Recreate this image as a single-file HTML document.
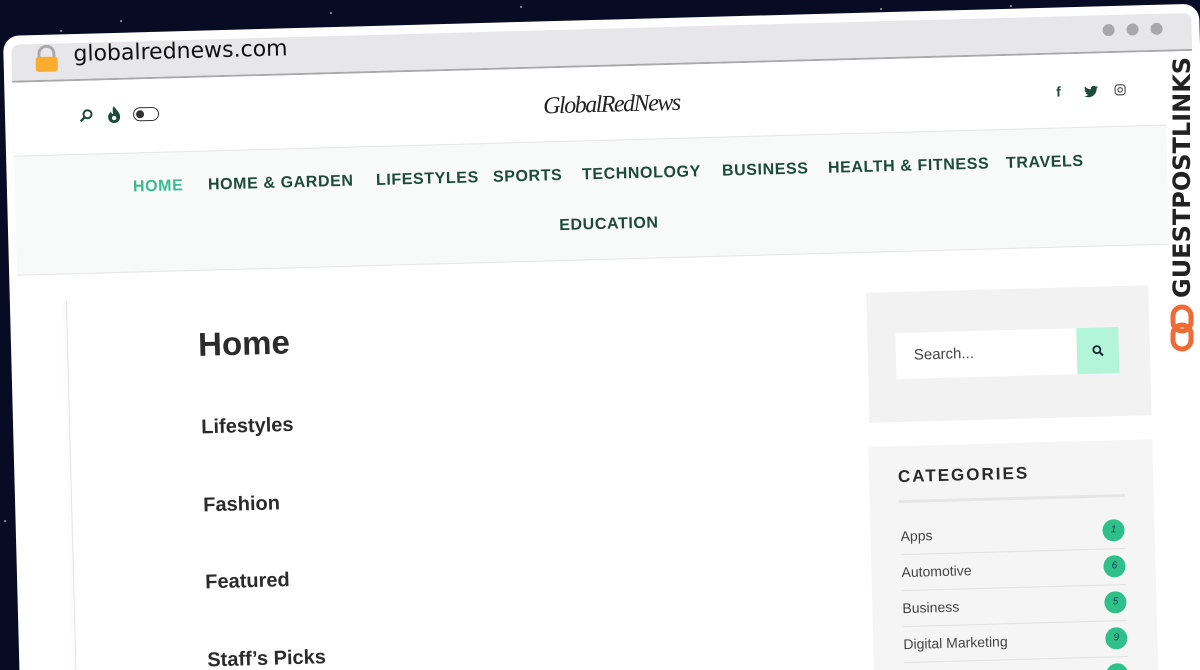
<!DOCTYPE html>
<html><head><meta charset="utf-8"><style>
*{margin:0;padding:0;box-sizing:border-box}
html,body{width:1200px;height:670px;overflow:hidden}
body{background:#070b24;position:relative;font-family:"Liberation Sans",sans-serif}
.star{position:absolute;width:2px;height:2px;background:#fff;border-radius:50%;opacity:.6}
#w{position:absolute;left:0;top:0;width:1200px;height:760px;transform-origin:0 0;transform:matrix(1,-0.027,0.026,1,0,0);overflow:hidden}
.a{position:absolute}
.frame{left:2px;top:36px;width:1196px;height:760px;background:#fff;border-radius:16px}
.bar{left:10px;top:45px;width:1180px;height:38px;background:#e7e7e9;border-bottom:2px solid #a9a9ab;border-radius:8px 8px 0 0}
.page{left:10px;top:85px;width:1152px;height:700px;background:#fff}
.nav{left:10px;top:156px;width:1152px;height:120px;background:#f8f9f9;border-top:1px solid #e6e6e6;border-bottom:1px solid #e6e6e6}
.ni{font-size:16px;font-weight:bold;color:#1d4a3b;letter-spacing:0.6px;white-space:nowrap;transform:translateY(-50%)}
.h{color:#2b2b2b;font-weight:bold;transform:translateY(-50%);white-space:nowrap}
.cat{font-size:14px;color:#444;transform:translateY(-50%)}
.bd{width:22px;height:22px;border-radius:50%;background:#2fbf8a;color:#145;font-size:10px;font-style:italic;text-align:center;line-height:22px}
.ln{height:1px;background:#e2e2e2}
.dot{width:12px;height:12px;border-radius:50%;background:#a8a8ac}
</style></head><body>
<div class="star" style="left:120px;top:20px"></div><div class="star" style="left:330px;top:12px"></div><div class="star" style="left:520px;top:6px"></div><div class="star" style="left:700px;top:18px"></div><div class="star" style="left:880px;top:8px"></div><div class="star" style="left:60px;top:30px"></div><div class="star" style="left:1010px;top:5px"></div><div class="star" style="left:20px;top:300px"></div><div class="star" style="left:4px;top:520px"></div>
<div id="w">
<div class="a frame"></div>
<div class="a bar"></div>
<div class="a" style="left:36px;top:46px;width:18px;height:16px;border:3px solid #a9a9a9;border-bottom:none;border-radius:9px 9px 0 0"></div>
<div class="a" style="left:34px;top:58px;width:22px;height:15px;background:#f9ac2f;border-radius:3px"></div>
<div class="a" style="left:72px;top:44px;font-size:22px;color:#111;font-family:'DejaVu Sans',sans-serif">globalrednews.com</div>
<div class="a dot" style="left:1101px;top:54px"></div><div class="a dot" style="left:1125px;top:54px"></div><div class="a dot" style="left:1149px;top:54px"></div>
<div class="a page"></div>
<svg class="a" style="left:76px;top:111px" width="14" height="14" viewBox="0 0 14 14"><circle cx="8.5" cy="5.5" r="4" fill="none" stroke="#1d4a3b" stroke-width="2"/><line x1="5.5" y1="8.5" x2="1.5" y2="12.5" stroke="#1d4a3b" stroke-width="2.4"/></svg>
<svg class="a" style="left:104px;top:109px" width="14" height="17" viewBox="0 0 14 17"><path d="M7 0C9 4 13 6 13 11a6 6 0 0 1-12 0c0-3 2-4 3-6 0 2 1 3 2 3 0-3-1-5 1-8z" fill="#1d4a3b"/><circle cx="7" cy="12" r="2.2" fill="#fff"/></svg>
<div class="a" style="left:130px;top:111px;width:26px;height:14px;border:1.5px solid #333;border-radius:8px"><div style="position:absolute;left:2px;top:1.5px;width:8px;height:8px;border-radius:50%;background:#333"></div></div>
<div class="a" style="left:540px;top:108px;font-family:'Liberation Serif',serif;font-style:italic;font-size:24px;color:#222;letter-spacing:-1.5px">GlobalRedNews</div>
<div class="a" style="left:1053px;top:112px;font-size:14px;font-weight:bold;color:#1d4a3b">f</div>
<svg class="a" style="left:1081px;top:115px" width="14" height="12" viewBox="0 0 24 20"><path d="M24 2.4a10 10 0 0 1-2.8.8A5 5 0 0 0 23.3.5a10 10 0 0 1-3.1 1.2A4.9 4.9 0 0 0 11.8 6 14 14 0 0 1 1.7.9a4.9 4.9 0 0 0 1.5 6.6A4.9 4.9 0 0 1 1 6.9a4.9 4.9 0 0 0 3.9 4.8 5 5 0 0 1-2.200.1 4.9 4.9 0 0 0 4.600 3.4A9.9 9.9 0 0 1 0 17.3 14 14 0 0 0 7.5 19.5c9 0 14-7.5 14-14v-.6A10 10 0 0 0 24 2.4z" fill="#1d4a3b"/></svg>
<svg class="a" style="left:1111px;top:114px" width="12" height="12" viewBox="0 0 12 12"><rect x="1" y="1" width="10" height="10" rx="3" fill="none" stroke="#555" stroke-width="1.2"/><circle cx="6" cy="6" r="2.2" fill="none" stroke="#555" stroke-width="1.2"/></svg>
<div class="a nav"></div>
<div class="a ni" style="left:128px;top:191px;color:#3dbb90">HOME</div>
<div class="a ni" style="left:203px;top:191px">HOME &amp; GARDEN</div>
<div class="a ni" style="left:371px;top:191px">LIFESTYLES</div>
<div class="a ni" style="left:488px;top:191px">SPORTS</div>
<div class="a ni" style="left:577px;top:191px">TECHNOLOGY</div>
<div class="a ni" style="left:717px;top:191px">BUSINESS</div>
<div class="a ni" style="left:823px;top:191px">HEALTH &amp; FITNESS</div>
<div class="a ni" style="left:1001px;top:191px">TRAVELS</div>
<div class="a ni" style="left:553px;top:241px">EDUCATION</div>
<div class="a" style="left:58px;top:302px;width:1px;height:460px;background:#e4e4e4;box-shadow:-2px 0 4px rgba(0,0,0,.06)"></div>
<div class="a h" style="left:189px;top:350px;font-size:33px">Home</div>
<div class="a h" style="left:190px;top:433px;font-size:20px">Lifestyles</div>
<div class="a h" style="left:190px;top:511px;font-size:20px">Fashion</div>
<div class="a h" style="left:190px;top:588px;font-size:20px">Featured</div>
<div class="a h" style="left:190px;top:666px;font-size:20px">Staff’s Picks</div>
<div class="a" style="left:858px;top:316px;width:282px;height:130px;background:#f2f2f2"></div>
<div class="a" style="left:886px;top:357px;width:181px;height:46px;background:#fff;font-size:15px;color:#444;padding:14px 18px">Search...</div>
<div class="a" style="left:1067px;top:357px;width:42px;height:46px;background:#b3f5d8"></div>
<svg class="a" style="left:1082px;top:374px" width="12" height="12" viewBox="0 0 12 12"><circle cx="5" cy="5" r="3.5" fill="none" stroke="#123" stroke-width="1.8"/><line x1="7.5" y1="7.5" x2="11" y2="11" stroke="#123" stroke-width="2"/></svg>
<div class="a" style="left:856px;top:470px;width:284px;height:300px;background:#f5f5f5"></div>
<div class="a" style="left:885px;top:491px;font-size:17px;font-weight:bold;letter-spacing:2px;color:#2a2a2a">CATEGORIES</div>
<div class="a" style="left:885px;top:524px;width:226px;height:3px;background:#e6e6e6"></div>
<div class="a cat" style="left:886px;top:560px">Apps</div><div class="a bd" style="left:1088px;top:549px">1</div><div class="a ln" style="left:886px;top:578px;width:224px"></div>
<div class="a cat" style="left:886px;top:596px">Automotive</div><div class="a bd" style="left:1088px;top:585px">6</div><div class="a ln" style="left:886px;top:614px;width:224px"></div>
<div class="a cat" style="left:886px;top:632px">Business</div><div class="a bd" style="left:1088px;top:621px">5</div><div class="a ln" style="left:886px;top:650px;width:224px"></div>
<div class="a cat" style="left:886px;top:668px">Digital Marketing</div><div class="a bd" style="left:1088px;top:657px">9</div><div class="a ln" style="left:886px;top:686px;width:224px"></div>
<div class="a bd" style="left:1088px;top:693px"></div>
</div>
<div style="position:absolute;left:1168px;top:298px;width:300px;transform-origin:0 0;transform:rotate(-90deg);font-size:24px;font-weight:900;color:#222;letter-spacing:0px;font-family:'DejaVu Sans',sans-serif">GUESTPOSTLINKS</div>
<svg style="position:absolute;left:1170px;top:304px" width="24" height="48" viewBox="0 0 24 48"><rect x="3" y="3" width="18" height="24" rx="9" fill="none" stroke="#f06a35" stroke-width="5"/><rect x="3" y="21" width="18" height="24" rx="9" fill="none" stroke="#f06a35" stroke-width="5"/></svg>
</body></html>
